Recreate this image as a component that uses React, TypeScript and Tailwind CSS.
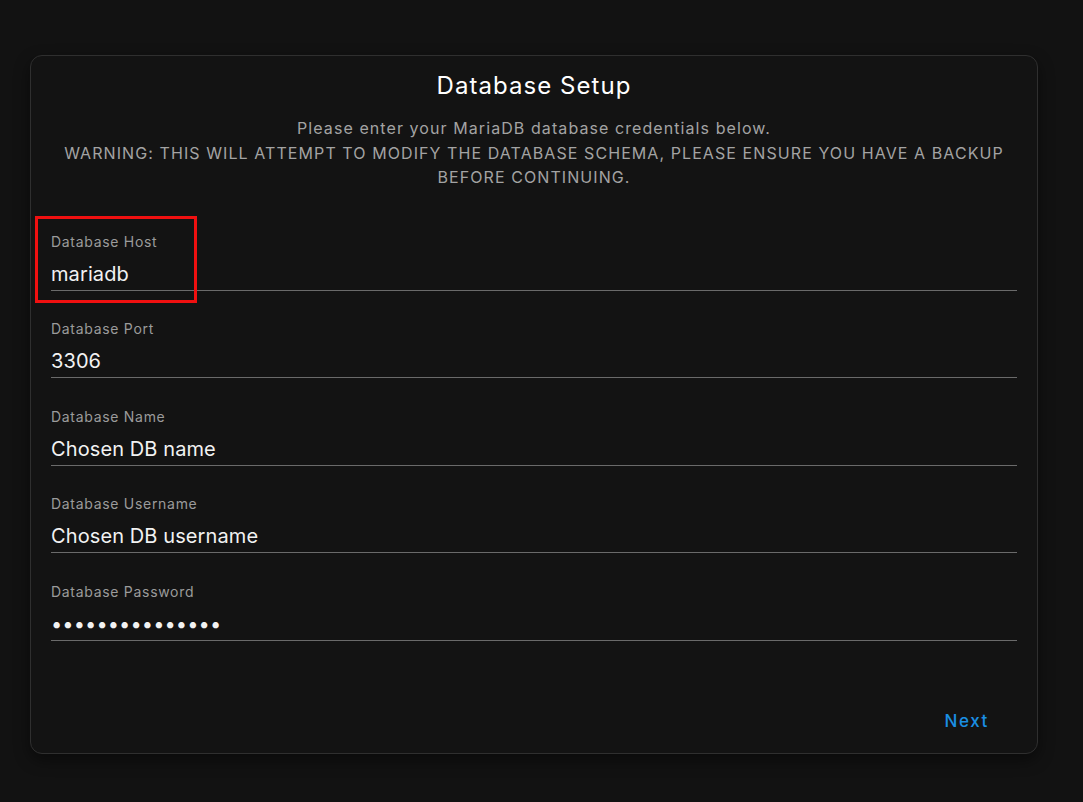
const fields = [
  { label: "Database Host", value: "mariadb" },
  { label: "Database Port", value: "3306" },
  { label: "Database Name", value: "Chosen DB name" },
  { label: "Database Username", value: "Chosen DB username" },
  { label: "Database Password", value: "secretpassword1", password: true },
];

function Field({ label, value, password }: { label: string; value: string; password?: boolean }) {
  return (
    <div className="flex flex-col">
      <label className="text-[14px] leading-[20px] tracking-[0.7px] text-[#9b9b9b]">{label}</label>
      <div className="mt-[8px] pb-[2px] border-b border-[#6a6a6a]">
        <input
          type={password ? "password" : "text"}
          defaultValue={value}
          readOnly
          className="w-full bg-transparent outline-none text-[20px] leading-[28px] h-[28px] text-[#f2f2f2] tracking-[0.1px]"
          style={{ fontFamily: "inherit" }}
        />
      </div>
    </div>
  );
}

export default function App() {
  return (
    <div
      className="min-h-screen bg-[#121212] pl-[30px] pt-[55px] pb-[48px]"
      style={{ fontFamily: "Inter, 'Noto Sans', sans-serif" }}
    >
      <div className="relative w-[1008px] rounded-[12px] border border-[#2f2f2f] bg-[#131313] shadow-[0_6px_16px_rgba(0,0,0,0.45)] px-[20px] pt-[14px] pb-[13px]">
        <h1 className="text-center text-[24px] leading-[32px] tracking-[1.05px] text-white">Database Setup</h1>
        <p className="mt-[14px] text-center text-[16px] leading-[24.5px] tracking-[1.08px] text-[#a3a3a3] px-[10px]">
          Please enter your MariaDB database credentials below.
          <br />
          WARNING: THIS WILL ATTEMPT TO MODIFY THE DATABASE SCHEMA, PLEASE ENSURE YOU HAVE A BACKUP BEFORE CONTINUING.
        </p>

        <div className="mt-[42px] flex flex-col gap-[28.5px]">
          {fields.map((f) => (
            <Field key={f.label} {...f} />
          ))}
        </div>

        <div className="mt-[63px] flex justify-end pr-[20px]">
          <button className="px-[8px] h-[36px] text-[17px] font-medium tracking-[1.6px] text-[#1a8fe3]">Next</button>
        </div>

        {/* highlight around the host field */}
        <div className="absolute left-[4px] top-[160px] w-[162px] h-[87px] border-[3px] border-[#f01010]" />
      </div>
    </div>
  );
}
